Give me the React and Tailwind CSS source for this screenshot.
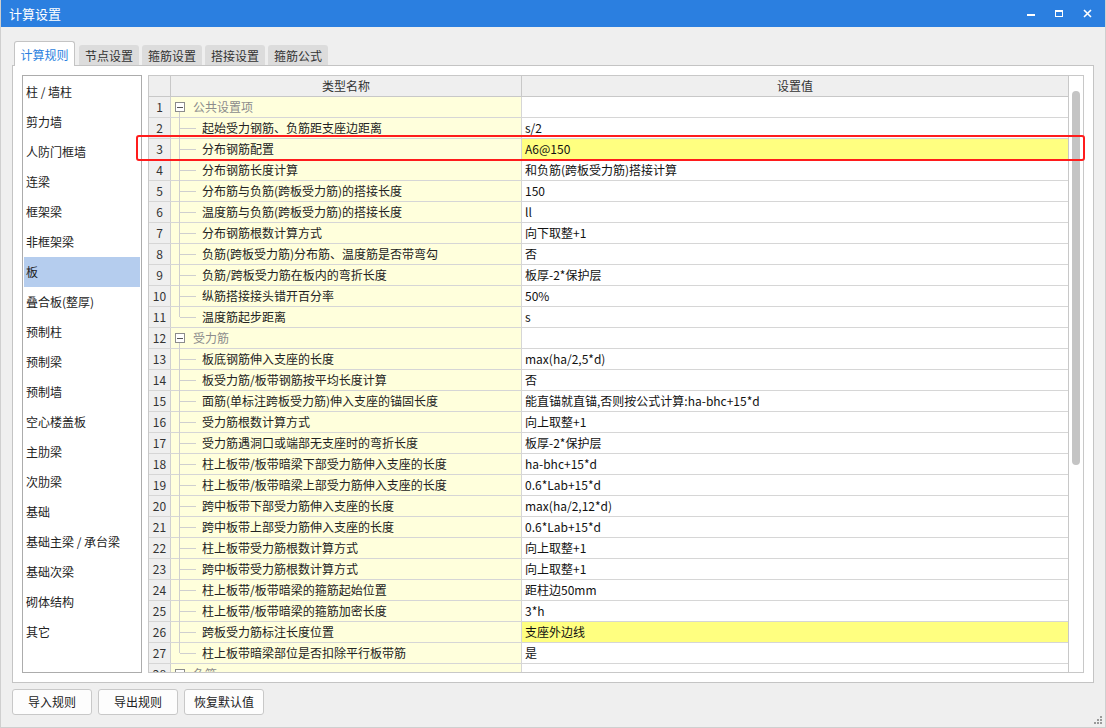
import React from 'react';

// left menu items
const menuItems = [
    '柱 / 墙柱', '剪力墙', '人防门框墙', '连梁', '框架梁', '非框架梁', '板', '叠合板(整厚)',
    '预制柱', '预制梁', '预制墙', '空心楼盖板', '主肋梁', '次肋梁', '基础', '基础主梁 / 承台梁',
    '基础次梁', '砌体结构', '其它',
];

const tabs = ['计算规则', '节点设置', '箍筋设置', '搭接设置', '箍筋公式'];

// rows of the rule table: g = group header, last = last child in its group, hl = highlighted value
const rows = [
    { n: 1, g: true, name: '公共设置项', value: '' },
    { n: 2, name: '起始受力钢筋、负筋距支座边距离', value: 's/2' },
    { n: 3, name: '分布钢筋配置', value: 'A6@150', hl: true },
    { n: 4, name: '分布钢筋长度计算', value: '和负筋(跨板受力筋)搭接计算' },
    { n: 5, name: '分布筋与负筋(跨板受力筋)的搭接长度', value: '150' },
    { n: 6, name: '温度筋与负筋(跨板受力筋)的搭接长度', value: 'll' },
    { n: 7, name: '分布钢筋根数计算方式', value: '向下取整+1' },
    { n: 8, name: '负筋(跨板受力筋)分布筋、温度筋是否带弯勾', value: '否' },
    { n: 9, name: '负筋/跨板受力筋在板内的弯折长度', value: '板厚-2*保护层' },
    { n: 10, name: '纵筋搭接接头错开百分率', value: '50%' },
    { n: 11, name: '温度筋起步距离', value: 's', last: true },
    { n: 12, g: true, name: '受力筋', value: '' },
    { n: 13, name: '板底钢筋伸入支座的长度', value: 'max(ha/2,5*d)' },
    { n: 14, name: '板受力筋/板带钢筋按平均长度计算', value: '否' },
    { n: 15, name: '面筋(单标注跨板受力筋)伸入支座的锚固长度', value: '能直锚就直锚,否则按公式计算:ha-bhc+15*d' },
    { n: 16, name: '受力筋根数计算方式', value: '向上取整+1' },
    { n: 17, name: '受力筋遇洞口或端部无支座时的弯折长度', value: '板厚-2*保护层' },
    { n: 18, name: '柱上板带/板带暗梁下部受力筋伸入支座的长度', value: 'ha-bhc+15*d' },
    { n: 19, name: '柱上板带/板带暗梁上部受力筋伸入支座的长度', value: '0.6*Lab+15*d' },
    { n: 20, name: '跨中板带下部受力筋伸入支座的长度', value: 'max(ha/2,12*d)' },
    { n: 21, name: '跨中板带上部受力筋伸入支座的长度', value: '0.6*Lab+15*d' },
    { n: 22, name: '柱上板带受力筋根数计算方式', value: '向上取整+1' },
    { n: 23, name: '跨中板带受力筋根数计算方式', value: '向上取整+1' },
    { n: 24, name: '柱上板带/板带暗梁的箍筋起始位置', value: '距柱边50mm' },
    { n: 25, name: '柱上板带/板带暗梁的箍筋加密长度', value: '3*h' },
    { n: 26, name: '跨板受力筋标注长度位置', value: '支座外边线', hl: true },
    { n: 27, name: '柱上板带暗梁部位是否扣除平行板带筋', value: '是', last: true },
    { n: 28, g: true, name: '负筋', value: '' },
];

const TitleBar = () => (
    <div className="h-[27px] bg-[#2b7fe0] flex items-center justify-between pl-[8px] shrink-0">
        <span className="text-white text-[13px]">计算设置</span>
        <div className="flex items-center h-full">
            <div className="w-[28px] h-full flex items-center justify-center">
                <div className="w-[8px] h-[2px] bg-white mt-[3px]"></div>
            </div>
            <div className="w-[28px] h-full flex items-center justify-center">
                <div className="w-[8px] h-[7px] border border-white border-t-2"></div>
            </div>
            <div className="w-[28px] h-full flex items-center justify-center mr-[4px]">
                <svg width="9" height="9" viewBox="0 0 9 9">
                    <path d="M1 1 L8 8 M8 1 L1 8" stroke="white" strokeWidth="1.6" />
                </svg>
            </div>
        </div>
    </div>
);

const Tabs = () => (
    <div className="flex items-end pl-[13px] pt-[15px] h-[39px] shrink-0 relative z-10 -mb-px">
        {tabs.map((t, i) =>
            i === 0 ? (
                <div key={t} className="h-[25px] w-[61px] bg-white border border-[#c4c4c4] border-b-0 rounded-t-[3px] flex items-center justify-center text-[12px] text-[#2b7fe0] mr-[4px] pt-px">
                    {t}
                </div>
            ) : (
                <div key={t} className="h-[20px] w-[60px] bg-[#dcdcdc] rounded-t-[3px] flex items-center justify-center text-[12px] text-[#333] mr-[3px] mb-px pt-px">
                    {t}
                </div>
            )
        )}
    </div>
);

const Sidebar = () => (
    <div className="w-[120px] border border-[#acacac] bg-white p-px shrink-0">
        {menuItems.map((m, i) => (
            <div
                key={m}
                className={`h-[30px] flex items-center pl-[2px] text-[12px] text-[#222] ${i === 6 ? 'bg-[#b5cdee]' : ''}`}
            >
                {m}
            </div>
        ))}
    </div>
);

const NameCell = ({ row }) => {
    if (row.g) {
        return (
            <div className="relative h-full flex items-center bg-[#ffffdc] border-r border-[#d6d6d6]">
                <div className="ml-[4px] w-[10px] h-[10px] border border-[#8c8c8c] bg-white flex items-center justify-center">
                    <div className="w-[6px] h-px bg-[#555]"></div>
                </div>
                <span className="ml-[8px] text-[#8c8c8c]">{row.name}</span>
                <div className="absolute left-[8px] top-[15px] bottom-[-1px] w-px bg-[#cfcfcf]"></div>
            </div>
        );
    }
    return (
        <div className="relative h-full flex items-center bg-[#ffffdc] border-r border-[#d6d6d6]">
            {/* tree lines */}
            <div className={`absolute left-[8px] top-[-1px] w-px bg-[#cfcfcf] ${row.last ? 'h-[11px]' : 'bottom-[-1px]'}`}></div>
            <div className="absolute left-[9px] top-[10px] w-[16px] h-px bg-[#cfcfcf]"></div>
            <span className="ml-[31px] text-[#222]">{row.name}</span>
        </div>
    );
};

const RuleTable = () => (
    <div className="flex-1 border border-[#c8c8c8] bg-white flex overflow-hidden">
        <div className="flex-1 flex flex-col overflow-hidden text-[12px]">
            {/* header */}
            <div className="grid grid-cols-[22px_351px_1fr] h-[21px] shrink-0 bg-[#efefef] border-b border-[#c8c8c8]">
                <div className="border-r border-[#c8c8c8]"></div>
                <div className="border-r border-[#c8c8c8] flex items-center justify-center text-[#333]">类型名称</div>
                <div className="flex items-center justify-center text-[#333]">设置值</div>
            </div>
            {rows.map((r) => (
                <div key={r.n} className="grid grid-cols-[22px_351px_1fr] h-[21px] shrink-0 border-b border-[#d6d6d6]">
                    <div className="bg-[#efefef] border-r border-[#d0d0d0] flex items-center justify-center text-[#333]">{r.n}</div>
                    <NameCell row={r} />
                    <div className={`flex items-center pl-[3px] text-[#111] ${r.hl ? 'bg-[#ffff80]' : 'bg-white'}`}>{r.value}</div>
                </div>
            ))}
        </div>
        {/* scrollbar */}
        <div className="w-[15px] border-l border-[#c8c8c8] shrink-0 pt-[15px] pl-[3px]">
            <div className="w-[8px] h-[374px] rounded-full bg-[#c4c4c4]"></div>
        </div>
    </div>
);

const App = () => {
    return (
        <div
            className="w-[1106px] h-[728px] bg-[#efefef] flex flex-col border-x border-b border-[#cfcfcf] overflow-hidden relative"
            style={{ fontFamily: '"Noto Sans CJK SC", "Noto Sans", "Liberation Sans", sans-serif' }}
        >
            <TitleBar />
            <Tabs />
            <div className="ml-[11px] w-[1082px] h-[618px] border border-[#c4c4c4] bg-white p-[9px] flex gap-[6px] relative shrink-0">
                <Sidebar />
                <RuleTable />
                {/* highlight frame around row 3 */}
                <div className="absolute left-[123px] top-[69px] w-[949px] h-[26px] border-2 border-[#ff1c1c] rounded-[3px] pointer-events-none"></div>
            </div>
            <div className="flex gap-[6px] ml-[11px] mt-[6px]">
                {['导入规则', '导出规则', '恢复默认值'].map((b) => (
                    <button key={b} className="w-[80px] h-[26px] bg-[#fdfdfd] border border-[#c8c8c8] rounded-[3px] text-[12px] text-[#222] flex items-center justify-center">
                        {b}
                    </button>
                ))}
            </div>
            {/* resize grip */}
            <svg className="absolute right-[3px] bottom-[3px]" width="8" height="8" viewBox="0 0 8 8">
                <rect x="6" y="0" width="2" height="2" fill="#9a9a9a" />
                <rect x="3" y="3" width="2" height="2" fill="#9a9a9a" />
                <rect x="6" y="3" width="2" height="2" fill="#9a9a9a" />
                <rect x="0" y="6" width="2" height="2" fill="#9a9a9a" />
                <rect x="3" y="6" width="2" height="2" fill="#9a9a9a" />
                <rect x="6" y="6" width="2" height="2" fill="#9a9a9a" />
            </svg>
        </div>
    );
};

export default App;
